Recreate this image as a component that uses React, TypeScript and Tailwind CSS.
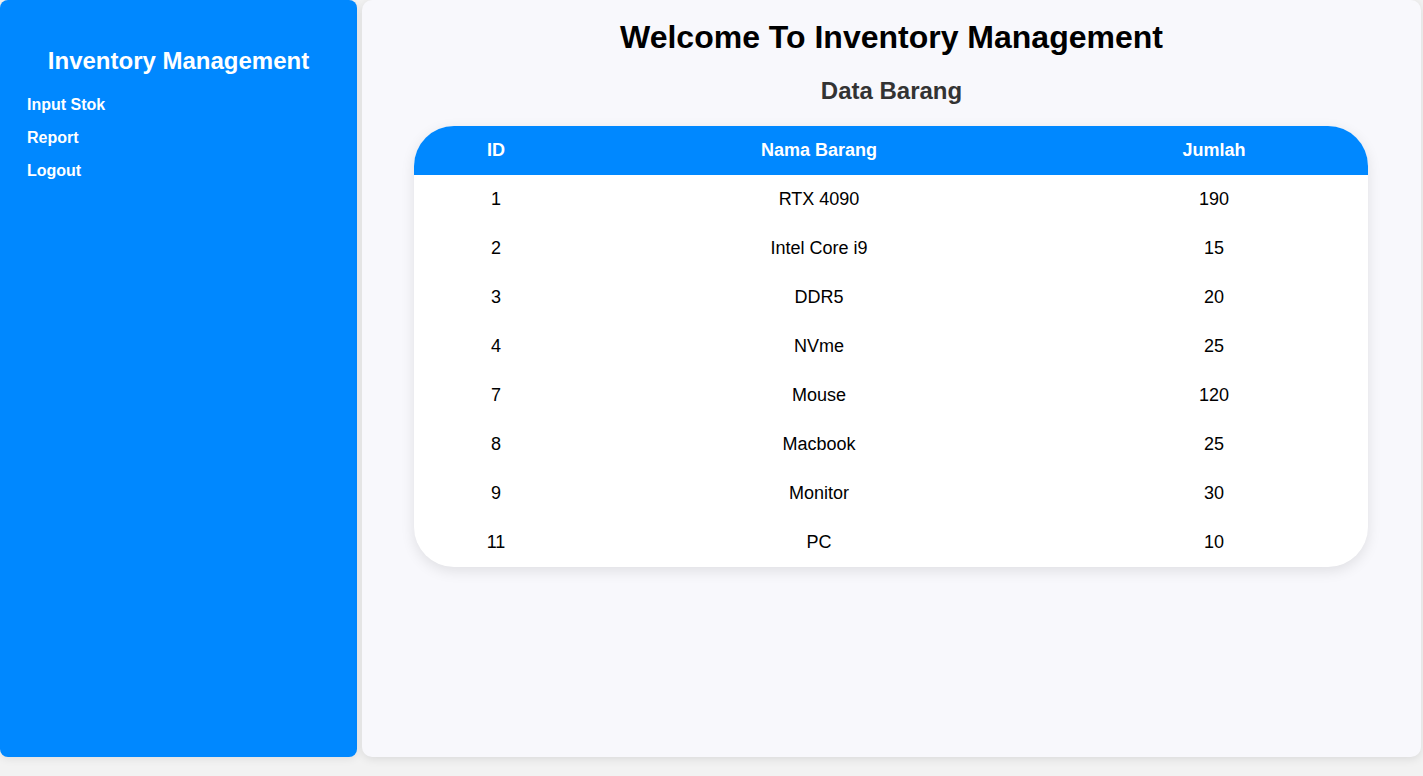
import React from "react";

const ITEMS = [
  { id: 1, nama: "RTX 4090", jumlah: 190 },
  { id: 2, nama: "Intel Core i9", jumlah: 15 },
  { id: 3, nama: "DDR5", jumlah: 20 },
  { id: 4, nama: "NVme", jumlah: 25 },
  { id: 7, nama: "Mouse", jumlah: 120 },
  { id: 8, nama: "Macbook", jumlah: 25 },
  { id: 9, nama: "Monitor", jumlah: 30 },
  { id: 11, nama: "PC", jumlah: 10 },
];

const LINKS = ["Input Stok", "Report", "Logout"];

export default function App() {
  return (
    <div
      className="flex h-[776px] w-full gap-[5px] bg-[#f2f2f2] pr-[2px] pb-[19px] text-black"
      style={{ fontFamily: '"Liberation Sans", Arial, sans-serif' }}
    >
      {/* Sidebar */}
      <aside className="w-[357px] shrink-0 rounded-lg bg-[#0088ff] px-[27px] pt-[46px] text-white shadow-[0_2px_8px_rgba(0,0,0,0.08)]">
        <h2 className="text-center text-[24px] font-bold leading-[30px]">Inventory Management</h2>
        <nav className="mt-[19px] flex flex-col gap-[14px]">
          {LINKS.map((l) => (
            <a key={l} className="text-[16px] font-bold leading-[19px]">
              {l}
            </a>
          ))}
        </nav>
      </aside>

      {/* Main */}
      <main className="flex-1 rounded-[10px] bg-[#f8f8fc] pt-[19px] shadow-[0_2px_10px_rgba(0,0,0,0.1)]">
        <h1 className="text-center text-[32px] font-bold leading-[37px]">Welcome To Inventory Management</h1>
        <h2 className="mt-[21px] text-center text-[24px] font-bold leading-[28px] text-[#333]">Data Barang</h2>

        <div className="ml-[52px] mt-[21px] w-[954px] overflow-hidden rounded-[40px] bg-white shadow-[0_4px_14px_rgba(0,0,0,0.1)]">
          <table className="w-full border-collapse text-center text-[18px]">
            <thead>
              <tr className="h-[49px] bg-[#0088ff] text-white">
                <th className="w-[164px] font-bold">ID</th>
                <th className="w-[482px] font-bold">Nama Barang</th>
                <th className="font-bold">Jumlah</th>
              </tr>
            </thead>
            <tbody>
              {ITEMS.map((it) => (
                <tr key={it.id} className="h-[49px]">
                  <td>{it.id}</td>
                  <td>{it.nama}</td>
                  <td>{it.jumlah}</td>
                </tr>
              ))}
            </tbody>
          </table>
        </div>
      </main>
    </div>
  );
}
